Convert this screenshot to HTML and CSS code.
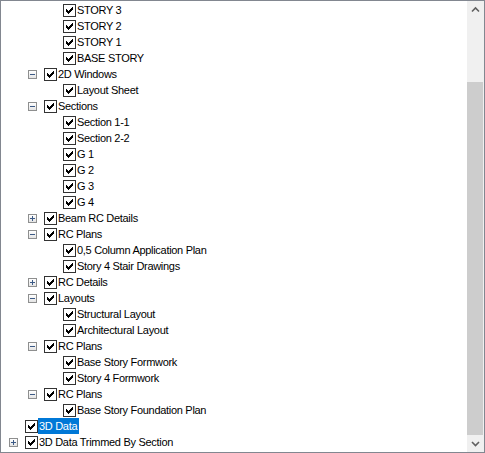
FILE: index.html
```html
<!DOCTYPE html>
<html>
<head>
<meta charset="utf-8">
<link rel="stylesheet" href="styles.css">
</head>
<body>
<div class="frame">
  <div class="tree">
    <div class="row l2"><span class="exp none"></span><span class="cb"><svg viewBox="0 0 11 11"><path d="M8 2h1v1h-1z M7 3h2v1h-2z M2 4h1v1h-1z M6 4h3v1h-3z M2 5h2v1h-2z M5 5h3v1h-3z M2 6h5v1h-5z M3 7h3v1h-3z M4 8h1v1h-1z"/></svg></span><span class="lbl">STORY 3</span></div>
    <div class="row l2"><span class="exp none"></span><span class="cb"><svg viewBox="0 0 11 11"><path d="M8 2h1v1h-1z M7 3h2v1h-2z M2 4h1v1h-1z M6 4h3v1h-3z M2 5h2v1h-2z M5 5h3v1h-3z M2 6h5v1h-5z M3 7h3v1h-3z M4 8h1v1h-1z"/></svg></span><span class="lbl">STORY 2</span></div>
    <div class="row l2"><span class="exp none"></span><span class="cb"><svg viewBox="0 0 11 11"><path d="M8 2h1v1h-1z M7 3h2v1h-2z M2 4h1v1h-1z M6 4h3v1h-3z M2 5h2v1h-2z M5 5h3v1h-3z M2 6h5v1h-5z M3 7h3v1h-3z M4 8h1v1h-1z"/></svg></span><span class="lbl">STORY 1</span></div>
    <div class="row l2"><span class="exp none"></span><span class="cb"><svg viewBox="0 0 11 11"><path d="M8 2h1v1h-1z M7 3h2v1h-2z M2 4h1v1h-1z M6 4h3v1h-3z M2 5h2v1h-2z M5 5h3v1h-3z M2 6h5v1h-5z M3 7h3v1h-3z M4 8h1v1h-1z"/></svg></span><span class="lbl">BASE STORY</span></div>
    <div class="row l1"><span class="exp"><i class="h"></i></span><span class="cb"><svg viewBox="0 0 11 11"><path d="M8 2h1v1h-1z M7 3h2v1h-2z M2 4h1v1h-1z M6 4h3v1h-3z M2 5h2v1h-2z M5 5h3v1h-3z M2 6h5v1h-5z M3 7h3v1h-3z M4 8h1v1h-1z"/></svg></span><span class="lbl">2D Windows</span></div>
    <div class="row l2"><span class="exp none"></span><span class="cb"><svg viewBox="0 0 11 11"><path d="M8 2h1v1h-1z M7 3h2v1h-2z M2 4h1v1h-1z M6 4h3v1h-3z M2 5h2v1h-2z M5 5h3v1h-3z M2 6h5v1h-5z M3 7h3v1h-3z M4 8h1v1h-1z"/></svg></span><span class="lbl">Layout Sheet</span></div>
    <div class="row l1"><span class="exp"><i class="h"></i></span><span class="cb"><svg viewBox="0 0 11 11"><path d="M8 2h1v1h-1z M7 3h2v1h-2z M2 4h1v1h-1z M6 4h3v1h-3z M2 5h2v1h-2z M5 5h3v1h-3z M2 6h5v1h-5z M3 7h3v1h-3z M4 8h1v1h-1z"/></svg></span><span class="lbl">Sections</span></div>
    <div class="row l2"><span class="exp none"></span><span class="cb"><svg viewBox="0 0 11 11"><path d="M8 2h1v1h-1z M7 3h2v1h-2z M2 4h1v1h-1z M6 4h3v1h-3z M2 5h2v1h-2z M5 5h3v1h-3z M2 6h5v1h-5z M3 7h3v1h-3z M4 8h1v1h-1z"/></svg></span><span class="lbl">Section 1-1</span></div>
    <div class="row l2"><span class="exp none"></span><span class="cb"><svg viewBox="0 0 11 11"><path d="M8 2h1v1h-1z M7 3h2v1h-2z M2 4h1v1h-1z M6 4h3v1h-3z M2 5h2v1h-2z M5 5h3v1h-3z M2 6h5v1h-5z M3 7h3v1h-3z M4 8h1v1h-1z"/></svg></span><span class="lbl">Section 2-2</span></div>
    <div class="row l2"><span class="exp none"></span><span class="cb"><svg viewBox="0 0 11 11"><path d="M8 2h1v1h-1z M7 3h2v1h-2z M2 4h1v1h-1z M6 4h3v1h-3z M2 5h2v1h-2z M5 5h3v1h-3z M2 6h5v1h-5z M3 7h3v1h-3z M4 8h1v1h-1z"/></svg></span><span class="lbl">G 1</span></div>
    <div class="row l2"><span class="exp none"></span><span class="cb"><svg viewBox="0 0 11 11"><path d="M8 2h1v1h-1z M7 3h2v1h-2z M2 4h1v1h-1z M6 4h3v1h-3z M2 5h2v1h-2z M5 5h3v1h-3z M2 6h5v1h-5z M3 7h3v1h-3z M4 8h1v1h-1z"/></svg></span><span class="lbl">G 2</span></div>
    <div class="row l2"><span class="exp none"></span><span class="cb"><svg viewBox="0 0 11 11"><path d="M8 2h1v1h-1z M7 3h2v1h-2z M2 4h1v1h-1z M6 4h3v1h-3z M2 5h2v1h-2z M5 5h3v1h-3z M2 6h5v1h-5z M3 7h3v1h-3z M4 8h1v1h-1z"/></svg></span><span class="lbl">G 3</span></div>
    <div class="row l2"><span class="exp none"></span><span class="cb"><svg viewBox="0 0 11 11"><path d="M8 2h1v1h-1z M7 3h2v1h-2z M2 4h1v1h-1z M6 4h3v1h-3z M2 5h2v1h-2z M5 5h3v1h-3z M2 6h5v1h-5z M3 7h3v1h-3z M4 8h1v1h-1z"/></svg></span><span class="lbl">G 4</span></div>
    <div class="row l1"><span class="exp"><i class="h"></i><i class="v"></i></span><span class="cb"><svg viewBox="0 0 11 11"><path d="M8 2h1v1h-1z M7 3h2v1h-2z M2 4h1v1h-1z M6 4h3v1h-3z M2 5h2v1h-2z M5 5h3v1h-3z M2 6h5v1h-5z M3 7h3v1h-3z M4 8h1v1h-1z"/></svg></span><span class="lbl">Beam RC Details</span></div>
    <div class="row l1"><span class="exp"><i class="h"></i></span><span class="cb"><svg viewBox="0 0 11 11"><path d="M8 2h1v1h-1z M7 3h2v1h-2z M2 4h1v1h-1z M6 4h3v1h-3z M2 5h2v1h-2z M5 5h3v1h-3z M2 6h5v1h-5z M3 7h3v1h-3z M4 8h1v1h-1z"/></svg></span><span class="lbl">RC Plans</span></div>
    <div class="row l2"><span class="exp none"></span><span class="cb"><svg viewBox="0 0 11 11"><path d="M8 2h1v1h-1z M7 3h2v1h-2z M2 4h1v1h-1z M6 4h3v1h-3z M2 5h2v1h-2z M5 5h3v1h-3z M2 6h5v1h-5z M3 7h3v1h-3z M4 8h1v1h-1z"/></svg></span><span class="lbl">0,5 Column Application Plan</span></div>
    <div class="row l2"><span class="exp none"></span><span class="cb"><svg viewBox="0 0 11 11"><path d="M8 2h1v1h-1z M7 3h2v1h-2z M2 4h1v1h-1z M6 4h3v1h-3z M2 5h2v1h-2z M5 5h3v1h-3z M2 6h5v1h-5z M3 7h3v1h-3z M4 8h1v1h-1z"/></svg></span><span class="lbl">Story 4 Stair Drawings</span></div>
    <div class="row l1"><span class="exp"><i class="h"></i><i class="v"></i></span><span class="cb"><svg viewBox="0 0 11 11"><path d="M8 2h1v1h-1z M7 3h2v1h-2z M2 4h1v1h-1z M6 4h3v1h-3z M2 5h2v1h-2z M5 5h3v1h-3z M2 6h5v1h-5z M3 7h3v1h-3z M4 8h1v1h-1z"/></svg></span><span class="lbl">RC Details</span></div>
    <div class="row l1"><span class="exp"><i class="h"></i></span><span class="cb"><svg viewBox="0 0 11 11"><path d="M8 2h1v1h-1z M7 3h2v1h-2z M2 4h1v1h-1z M6 4h3v1h-3z M2 5h2v1h-2z M5 5h3v1h-3z M2 6h5v1h-5z M3 7h3v1h-3z M4 8h1v1h-1z"/></svg></span><span class="lbl">Layouts</span></div>
    <div class="row l2"><span class="exp none"></span><span class="cb"><svg viewBox="0 0 11 11"><path d="M8 2h1v1h-1z M7 3h2v1h-2z M2 4h1v1h-1z M6 4h3v1h-3z M2 5h2v1h-2z M5 5h3v1h-3z M2 6h5v1h-5z M3 7h3v1h-3z M4 8h1v1h-1z"/></svg></span><span class="lbl">Structural Layout</span></div>
    <div class="row l2"><span class="exp none"></span><span class="cb"><svg viewBox="0 0 11 11"><path d="M8 2h1v1h-1z M7 3h2v1h-2z M2 4h1v1h-1z M6 4h3v1h-3z M2 5h2v1h-2z M5 5h3v1h-3z M2 6h5v1h-5z M3 7h3v1h-3z M4 8h1v1h-1z"/></svg></span><span class="lbl">Architectural Layout</span></div>
    <div class="row l1"><span class="exp"><i class="h"></i></span><span class="cb"><svg viewBox="0 0 11 11"><path d="M8 2h1v1h-1z M7 3h2v1h-2z M2 4h1v1h-1z M6 4h3v1h-3z M2 5h2v1h-2z M5 5h3v1h-3z M2 6h5v1h-5z M3 7h3v1h-3z M4 8h1v1h-1z"/></svg></span><span class="lbl">RC Plans</span></div>
    <div class="row l2"><span class="exp none"></span><span class="cb"><svg viewBox="0 0 11 11"><path d="M8 2h1v1h-1z M7 3h2v1h-2z M2 4h1v1h-1z M6 4h3v1h-3z M2 5h2v1h-2z M5 5h3v1h-3z M2 6h5v1h-5z M3 7h3v1h-3z M4 8h1v1h-1z"/></svg></span><span class="lbl">Base Story Formwork</span></div>
    <div class="row l2"><span class="exp none"></span><span class="cb"><svg viewBox="0 0 11 11"><path d="M8 2h1v1h-1z M7 3h2v1h-2z M2 4h1v1h-1z M6 4h3v1h-3z M2 5h2v1h-2z M5 5h3v1h-3z M2 6h5v1h-5z M3 7h3v1h-3z M4 8h1v1h-1z"/></svg></span><span class="lbl">Story 4 Formwork</span></div>
    <div class="row l1"><span class="exp"><i class="h"></i></span><span class="cb"><svg viewBox="0 0 11 11"><path d="M8 2h1v1h-1z M7 3h2v1h-2z M2 4h1v1h-1z M6 4h3v1h-3z M2 5h2v1h-2z M5 5h3v1h-3z M2 6h5v1h-5z M3 7h3v1h-3z M4 8h1v1h-1z"/></svg></span><span class="lbl">RC Plans</span></div>
    <div class="row l2"><span class="exp none"></span><span class="cb"><svg viewBox="0 0 11 11"><path d="M8 2h1v1h-1z M7 3h2v1h-2z M2 4h1v1h-1z M6 4h3v1h-3z M2 5h2v1h-2z M5 5h3v1h-3z M2 6h5v1h-5z M3 7h3v1h-3z M4 8h1v1h-1z"/></svg></span><span class="lbl">Base Story Foundation Plan</span></div>
    <div class="row l0"><span class="exp none"></span><span class="cb"><svg viewBox="0 0 11 11"><path d="M8 2h1v1h-1z M7 3h2v1h-2z M2 4h1v1h-1z M6 4h3v1h-3z M2 5h2v1h-2z M5 5h3v1h-3z M2 6h5v1h-5z M3 7h3v1h-3z M4 8h1v1h-1z"/></svg></span><span class="lbl sel">3D Data</span></div>
    <div class="row l0"><span class="exp"><i class="h"></i><i class="v"></i></span><span class="cb"><svg viewBox="0 0 11 11"><path d="M8 2h1v1h-1z M7 3h2v1h-2z M2 4h1v1h-1z M6 4h3v1h-3z M2 5h2v1h-2z M5 5h3v1h-3z M2 6h5v1h-5z M3 7h3v1h-3z M4 8h1v1h-1z"/></svg></span><span class="lbl">3D Data Trimmed By Section</span></div>
  </div>
  <div class="scrollbar">
    <div class="arrow"><svg viewBox="0 0 17 17"><path d="M5 10.5 L8.5 7 L12 10.5" /></svg></div>
    <div class="track-space"></div>
    <div class="thumb"></div>
    <div class="arrow"><svg viewBox="0 0 17 17"><path d="M5 7 L8.5 10.5 L12 7" /></svg></div>
  </div>
</div>
</body>
</html>
```
FILE: styles.css
```css
* { box-sizing: border-box; }
html, body { margin: 0; padding: 0; background: #fff; }
.frame {
  width: 485px;
  height: 453px;
  border: 1px solid #828790;
  display: flex;
  overflow: hidden;
  background: #fff;
  font-family: "Liberation Sans", Arial, sans-serif;
  font-size: 11px;
  letter-spacing: -0.3px;
  color: #000;
}
.tree {
  flex: 1;
  padding: 1px 0 0 0;
  overflow: hidden;
}
.row {
  display: flex;
  align-items: center;
  height: 16px;
  white-space: nowrap;
}
.row.l0 { padding-left: 0; }
.row.l1 { padding-left: 19px; }
.row.l2 { padding-left: 38px; }
.exp {
  width: 9px;
  height: 9px;
  margin-left: 8px;
  margin-right: 7px;
  border: 1px solid #8e8f8f;
  background: linear-gradient(#ffffff, #e4e4e4);
  position: relative;
  flex: none;
}
.exp.none { border: none; background: none; }
.exp .h {
  position: absolute;
  left: 1px; top: 3px;
  width: 5px; height: 1px;
  background: #3c5a86;
}
.exp .v {
  position: absolute;
  left: 3px; top: 1px;
  width: 1px; height: 5px;
  background: #3c5a86;
}
.cb {
  width: 13px;
  height: 13px;
  flex: none;
  border: 1px solid #333;
  background: #fff;
  position: relative;
}
.cb svg {
  position: absolute;
  left: 0; top: 0;
  width: 11px; height: 11px;
  shape-rendering: crispEdges;
  fill: #000;
}
.lbl {
  height: 16px;
  line-height: 16px;
  padding: 0 2px 0 1px;
  margin-left: 0;
}
.lbl.sel { background: #0078d7; color: #fff; }
.scrollbar {
  width: 17px;
  flex: none;
  display: flex;
  flex-direction: column;
  background: #f0f0f0;
}
.arrow {
  height: 17px;
  flex: none;
}
.arrow svg {
  width: 17px; height: 17px; display: block;
  fill: none;
  stroke: #606060;
  stroke-width: 1.6;
}
.track-space { height: 64px; flex: none; }
.thumb {
  flex: 1;
  background: #cdcdcd;
  margin-right: 1px;
}
```
